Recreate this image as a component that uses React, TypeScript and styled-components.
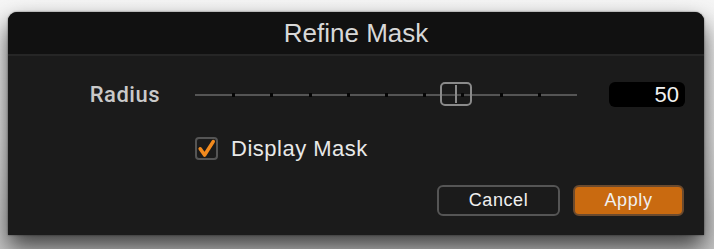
import React from "react";
import styled, { createGlobalStyle } from "styled-components";

const Global = createGlobalStyle`
  html, body { margin: 0; padding: 0; }
  body {
    width: 714px;
    height: 249px;
    overflow: hidden;
    background: linear-gradient(180deg, #f6f6f6 0%, #e6e6e6 55%, #c8c8c8 100%);
    font-family: "Liberation Sans", Arial, sans-serif;
  }
`;

const Stage = styled.div`
  padding: 12px 10px 14px 8px;
`;

const Dialog = styled.div`
  width: 696px;
  height: 223px;
  border-radius: 9px 9px 0 0;
  background: #1b1b1b;
  box-shadow: 0 12px 24px rgba(0, 0, 0, 0.7), 0 0 2px rgba(0, 0, 0, 0.6);
  overflow: hidden;
  display: flex;
  flex-direction: column;
`;

const TitleBar = styled.div`
  height: 42px;
  background: #111111;
  border-bottom: 2px solid #262626;
  display: flex;
  align-items: center;
  justify-content: center;
`;

const Title = styled.h1`
  margin: 0;
  font-family: "Liberation Sans", Arial, sans-serif;
  font-weight: 400;
  font-size: 26px;
  letter-spacing: 0px;
  color: #d8d8d8;
`;

const Body = styled.div`
  display: flex;
  flex-direction: column;
  padding: 26px 19px 0 0;
`;

const SliderRow = styled.div`
  display: grid;
  grid-template-columns: 152px 382px 76px;
  column-gap: 35px;
  align-items: center;
  height: 25px;
  & > :nth-child(3) { margin-left: -3px; }
`;

const Label = styled.span`
  text-align: right;
  font-family: "Roboto", "Liberation Sans", sans-serif;
  font-size: 22px;
  font-weight: 500;
  letter-spacing: 0.5px;
  color: #c9c9c9;
`;

const Track = styled.div`
  position: relative;
  height: 2px;
  background: #555555;
`;

const Tick = styled.span<{ $pos: number }>`
  position: absolute;
  top: -1px;
  left: ${(p) => p.$pos}%;
  width: 3px;
  height: 4px;
  margin-left: -1px;
  background: #050505;
`;

const Thumb = styled.div`
  position: absolute;
  top: -12px;
  width: 28px;
  height: 20px;
  margin-left: -16px;
  border: 2px solid #8a8a8a;
  border-radius: 5px;
  background: rgba(27, 27, 27, 0.15);
  &::after {
    content: "";
    position: absolute;
    left: 13px;
    top: 1px;
    width: 2px;
    height: 18px;
    background: #8a8a8a;
  }
`;

const ValueBox = styled.div`
  height: 25px;
  width: 76px;
  background: #000;
  border-radius: 6px;
  display: flex;
  align-items: center;
  justify-content: flex-end;
  padding-right: 6px;
  box-sizing: border-box;
  color: #f2f2f2;
  font-size: 22px;
  font-family: "Liberation Sans", Arial, sans-serif;
`;

const CheckRow = styled.label`
  display: flex;
  align-items: center;
  gap: 13px;
  margin-top: 30px;
  margin-left: 187px;
  height: 23px;
`;

const CheckBox = styled.span`
  width: 23px;
  height: 23px;
  box-sizing: border-box;
  border: 2px solid #555;
  border-radius: 4px;
  display: flex;
  align-items: center;
  justify-content: center;
`;

const CheckText = styled.span`
  font-size: 22px;
  color: #e8e8e8;
  letter-spacing: 0.5px;
`;

const ButtonRow = styled.div`
  display: flex;
  justify-content: flex-end;
  gap: 13px;
  margin-top: 25px;
  margin-right: 1px;
`;

const Button = styled.button<{ $primary?: boolean; $w: number }>`
  width: ${(p) => p.$w}px;
  height: 31px;
  box-sizing: border-box;
  border-radius: 6px;
  border: 2px solid ${(p) => (p.$primary ? "#6b4a2e" : "#555")};
  background: ${(p) => (p.$primary ? "#c96a10" : "transparent")};
  color: #f0f0f0;
  font-family: "Liberation Sans", Arial, sans-serif;
  font-size: 18px;
  letter-spacing: 0.6px;
  padding: 0;
`;

const ticks = [10, 20, 30, 40, 50, 60, 70, 80, 90];

export default function App() {
  return (
    <>
      <Global />
      <Stage>
        <Dialog>
          <TitleBar>
            <Title>Refine Mask</Title>
          </TitleBar>
          <Body>
            <SliderRow>
              <Label>Radius</Label>
              <Track>
                {ticks.map((t) => (
                  <Tick key={t} $pos={t} />
                ))}
                <Thumb style={{ left: "68.3%" }} />
              </Track>
              <ValueBox>50</ValueBox>
            </SliderRow>
            <CheckRow>
              <CheckBox>
                <svg width="19" height="19" viewBox="0 0 19 19">
                  <path
                    d="M3.2 9.8 L7.6 16 L16.2 2.6"
                    fill="none"
                    stroke="#f28a1e"
                    strokeWidth="3.6"
                    strokeLinecap="round"
                    strokeLinejoin="round"
                  />
                </svg>
              </CheckBox>
              <CheckText>Display Mask</CheckText>
            </CheckRow>
            <ButtonRow>
              <Button $w={123}>Cancel</Button>
              <Button $w={111} $primary>
                Apply
              </Button>
            </ButtonRow>
          </Body>
        </Dialog>
      </Stage>
    </>
  );
}
